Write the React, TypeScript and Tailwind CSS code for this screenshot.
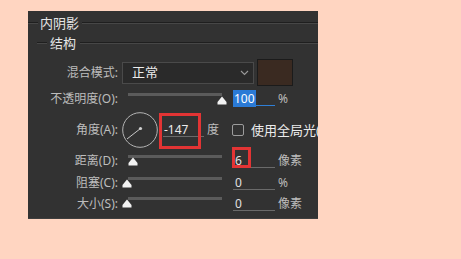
import React from "react";

function Groove({ className = "" }: { className?: string }) {
  return <div className={`h-[2px] border-t border-[#1f1f1f] border-b border-b-[#474747] ${className}`} />;
}

function Thumb({ left, top }: { left: number; top: number }) {
  return (
    <svg
      className="absolute"
      style={{ left, top }}
      width="10"
      height="9"
      viewBox="0 0 10 9"
    >
      <path d="M5 0.5 L9.5 6 L9.5 8.5 L0.5 8.5 L0.5 6 Z" fill="#f2f2f2" />
    </svg>
  );
}

function Slider({ thumb, trackTop = 5, thumbTop = 7 }: { thumb: number; trackTop?: number; thumbTop?: number }) {
  return (
    <div className="relative ml-[4px] w-[104px] self-stretch shrink-0">
      <div className="ml-[6px] w-[94px] h-[3px] bg-[#5b5b5b]" style={{ marginTop: trackTop }} />
      <Thumb left={thumb} top={thumbTop} />
    </div>
  );
}

function Label({ children }: { children: React.ReactNode }) {
  return <div className="w-[90px] shrink-0 text-right text-[12px] text-[#bdbdbd] leading-none">{children}</div>;
}

function ValueInput({ value, box = false }: { value: string; box?: boolean }) {
  return (
    <div className="relative ml-[7px] w-[42px] h-[14px] border-b border-[#6a6a6a] pl-[2px] text-[12px] leading-[13px] text-[#e0e0e0] shrink-0">
      {value}
      {box && <div className="absolute left-[-1px] top-[-7px] w-[19px] h-[21px] border-[3px] border-[#e23434]" />}
    </div>
  );
}

function Unit({ children }: { children: React.ReactNode }) {
  return <div className="ml-[3px] text-[12px] text-[#bdbdbd] leading-none">{children}</div>;
}

export default function App() {
  return (
    <div className="w-[461px] h-[259px] bg-[#ffd5c1] pt-[11px] font-['Noto_Sans','Noto_Sans_CJK_SC',sans-serif]">
      <div className="ml-[28px] w-[290px] h-[208px] bg-[#323232] overflow-hidden border-b border-[#3e3e3e]">
        {/* 内阴影 */}
        <div className="flex items-center h-[24px]">
          <Groove className="w-[10px]" />
          <div className="px-[2px] text-[13px] text-[#e6e6e6] leading-none">内阴影</div>
          <Groove className="flex-1 ml-[1px]" />
        </div>
        {/* 结构 */}
        <div className="flex items-center h-[16px] pl-[9px]">
          <Groove className="w-[10px]" />
          <div className="px-[3px] text-[13px] text-[#e6e6e6] leading-none">结构</div>
          <Groove className="flex-1 ml-[1px]" />
        </div>

        {/* 混合模式 */}
        <div className="flex items-center h-[27px] mt-[8px]">
          <Label>混合模式:</Label>
          <div className="ml-[4px] w-[132px] h-[22px] bg-[#2a2a2a] border border-[#4a4a4a] flex items-center justify-between pl-[9px] pr-[4px]">
            <span className="text-[13px] text-[#ececec] leading-none">正常</span>
            <svg width="9" height="6" viewBox="0 0 9 6">
              <path d="M1 1 L4.5 4.5 L8 1" stroke="#9a9a9a" strokeWidth="1.1" fill="none" />
            </svg>
          </div>
          <div className="ml-[3px] w-[36px] h-[27px] bg-[#3a2a21] border border-[#1b1b1b]" />
        </div>

        {/* 不透明度 */}
        <div className="flex items-center h-[22px] mt-[2px]">
          <Label>不透明度(O):</Label>
          <Slider thumb={95} trackTop={5} thumbTop={8} />
          <div className="relative ml-[7px] w-[42px] h-[14px] border-b border-[#2f7fd6] text-[12px] leading-[13px] shrink-0">
            <span className="bg-[#2a7ad6] text-white px-[1px]">100</span>
          </div>
          <Unit>%</Unit>
        </div>

        {/* 角度 */}
        <div className="flex items-center h-[40px]">
          <Label>角度(A):</Label>
          <svg className="ml-[4px] shrink-0" width="36" height="36" viewBox="0 0 36 36">
            <circle cx="18" cy="18" r="17.3" stroke="#b4b4b4" strokeWidth="1" fill="none" />
            <line x1="18.5" y1="16.5" x2="5" y2="27" stroke="#c8c8c8" strokeWidth="1" />
            <circle cx="18.5" cy="16.5" r="1.6" fill="#d0d0d0" />
          </svg>
          <div className="relative ml-[5px] w-[41px] h-[14px] border-b border-[#6a6a6a] pl-[1px] text-[12px] leading-[13px] text-[#ececec] shrink-0">
            -147
            <div className="absolute left-[-4px] top-[-10px] w-[42px] h-[36px] border-[3px] border-[#e23434]" />
          </div>
          <div className="ml-[3px] text-[12px] text-[#bdbdbd] leading-none">度</div>
          <div className="ml-[13px] w-[12px] h-[12px] border border-[#9c9c9c] rounded-[2px] shrink-0" />
          <div className="ml-[7px] text-[13px] text-[#ececec] leading-none whitespace-nowrap">使用全局光(</div>
        </div>

        {/* 距离 */}
        <div className="flex items-center h-[22px]">
          <Label>距离(D):</Label>
          <Slider thumb={6} trackTop={5} thumbTop={7} />
          <ValueInput value="6" box />
          <Unit>像素</Unit>
        </div>

        {/* 阻塞 */}
        <div className="flex items-center h-[21px]">
          <Label>阻塞(C):</Label>
          <Slider thumb={0} trackTop={5} thumbTop={7} />
          <ValueInput value="0" />
          <Unit>%</Unit>
        </div>

        {/* 大小 */}
        <div className="flex items-center h-[21px]">
          <Label>大小(S):</Label>
          <Slider thumb={0} trackTop={4} thumbTop={6} />
          <ValueInput value="0" />
          <Unit>像素</Unit>
        </div>
      </div>
    </div>
  );
}
